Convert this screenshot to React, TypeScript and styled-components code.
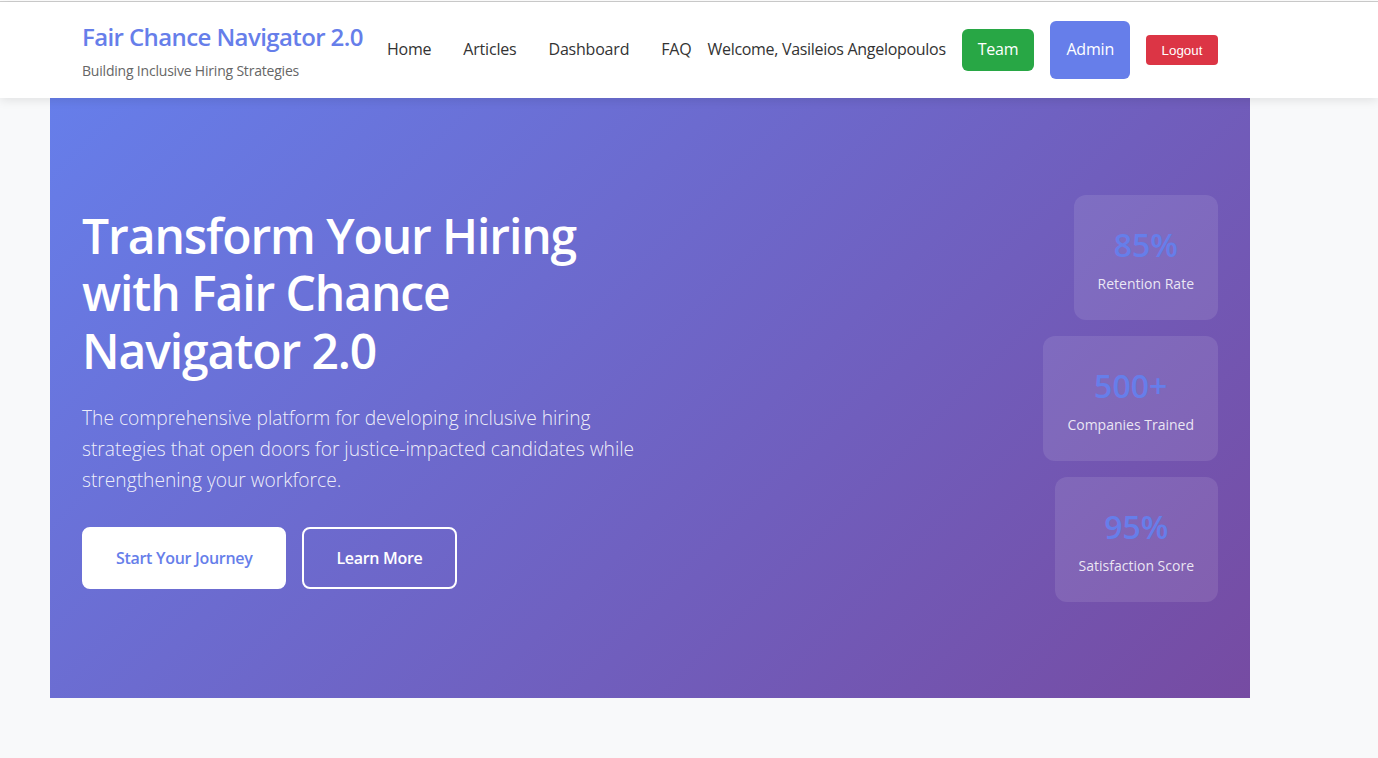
import React from "react";
import styled, { createGlobalStyle } from "styled-components";

const Global = createGlobalStyle`
  html, body { margin: 0; padding: 0; }
  body {
    background: #f8f9fa;
    font-family: "Open Sans", "Noto Sans", sans-serif;
    color: #333;
    line-height: 1.6;
  }
  * { box-sizing: border-box; }
`;

const TopRule = styled.div`
  height: 2px;
  background: linear-gradient(#ffffff 50%, #cfcfcf 50%);
`;

const Header = styled.header`
  background: #fff;
  box-shadow: 0 2px 10px rgba(0, 0, 0, 0.1);
  position: relative;
  z-index: 2;
`;

const HeaderInner = styled.div`
  width: 1200px;
  margin-left: 50px;
  padding: 16px 32px;
  display: flex;
  align-items: center;
  justify-content: space-between;
  white-space: nowrap;
`;

const Brand = styled.div`
  display: flex;
  flex-direction: column;
  flex-shrink: 0;
`;

const BrandTitle = styled.h1`
  margin: 0;
  font-size: 24px;
  font-weight: 600;
  letter-spacing: -0.6px;
  color: #667eea;
  line-height: 38px;
`;

const BrandSub = styled.p`
  margin: 4px 0 0;
  font-size: 14px;
  color: #666;
  line-height: 22px;
  letter-spacing: -0.2px;
`;

const Nav = styled.nav`
  display: flex;
  align-items: center;
  flex-shrink: 0;
`;

const NavLink = styled.a`
  padding: 8px 16px;
  color: #333;
  font-size: 16px;
  text-decoration: none;
  font-weight: 400;
  letter-spacing: -0.2px;
`;

const UserArea = styled.div`
  display: flex;
  align-items: center;
  gap: 16px;
`;

const Welcome = styled.span`
  font-size: 16px;
  color: #333;
  letter-spacing: -0.3px;
`;

const NavButton = styled.a<{ $bg: string; $tall?: boolean }>`
  background: ${(p) => p.$bg};
  color: #fff;
  font-size: 16px;
  font-weight: 400;
  text-decoration: none;
  border-radius: 6px;
  padding: ${(p) => (p.$tall ? "16px" : "8px")} 16px;
  line-height: 25.6px;
  letter-spacing: -0.2px;
`;

const LogoutButton = styled.button`
  background: #dc3545;
  color: #fff;
  border: none;
  border-radius: 4px;
  font-family: "Liberation Sans", Arial, sans-serif;
  font-size: 13.33px;
  padding: 0 15px;
  height: 30px;
  width: 72px;
`;

const Hero = styled.section`
  width: 1200px;
  height: 600px;
  margin-left: 50px;
  padding: 0 32px;
  background: linear-gradient(135deg, #667eea 0%, #764ba2 100%);
  display: flex;
  align-items: center;
  justify-content: space-between;
  color: #fff;
`;

const HeroText = styled.div`
  width: 580px;
`;

const HeroTitle = styled.h2`
  margin: 0 0 24px;
  font-size: 48px;
  font-weight: 600;
  letter-spacing: -1.1px;
  line-height: 1.2;
`;

const HeroLead = styled.p`
  margin: 0 0 32px;
  font-size: 19.2px;
  font-weight: 300;
  line-height: 1.6;
  color: rgba(255, 255, 255, 0.9);
`;

const Actions = styled.div`
  display: flex;
  gap: 16px;
`;

const CTA = styled.a<{ $primary?: boolean }>`
  display: inline-block;
  padding: 16px 32px;
  border: 2px solid #fff;
  border-radius: 8px;
  font-size: 16px;
  font-weight: 600;
  line-height: 26px;
  letter-spacing: -0.3px;
  text-decoration: none;
  background: ${(p) => (p.$primary ? "#fff" : "transparent")};
  color: ${(p) => (p.$primary ? "#667eea" : "#fff")};
`;

const Stats = styled.div`
  display: flex;
  flex-direction: column;
  align-items: flex-end;
  gap: 16px;
`;

const StatCard = styled.div`
  background: rgba(255, 255, 255, 0.1);
  border-radius: 12px;
  padding: 31px 24px 23px;
  text-align: center;
  height: 125px;
`;

const StatNumber = styled.div`
  font-size: 32px;
  font-weight: 600;
  line-height: 38px;
  color: #667eea;
  margin-bottom: 9px;
`;

const StatLabel = styled.div`
  font-size: 14px;
  line-height: 22px;
  color: rgba(255, 255, 255, 0.85);
`;

const stats = [
  { n: "85%", l: "Retention Rate" },
  { n: "500+", l: "Companies Trained" },
  { n: "95%", l: "Satisfaction Score" },
];

export default function App() {
  return (
    <>
      <Global />
      <TopRule />
      <Header>
        <HeaderInner>
          <Brand>
            <BrandTitle>Fair Chance Navigator 2.0</BrandTitle>
            <BrandSub>Building Inclusive Hiring Strategies</BrandSub>
          </Brand>
          <Nav>
            <NavLink href="#">Home</NavLink>
            <NavLink href="#">Articles</NavLink>
            <NavLink href="#">Dashboard</NavLink>
            <NavLink href="#">FAQ</NavLink>
            <UserArea>
              <Welcome>Welcome, Vasileios Angelopoulos</Welcome>
              <NavButton $bg="#28a745" href="#">Team</NavButton>
              <NavButton $bg="#667eea" $tall href="#">Admin</NavButton>
              <LogoutButton>Logout</LogoutButton>
            </UserArea>
          </Nav>
        </HeaderInner>
      </Header>
      <Hero>
        <HeroText>
          <HeroTitle>Transform Your Hiring with Fair Chance Navigator 2.0</HeroTitle>
          <HeroLead>
            The comprehensive platform for developing inclusive hiring strategies that open doors for
            justice-impacted candidates while strengthening your workforce.
          </HeroLead>
          <Actions>
            <CTA $primary href="#">Start Your Journey</CTA>
            <CTA href="#">Learn More</CTA>
          </Actions>
        </HeroText>
        <Stats>
          {stats.map((s) => (
            <StatCard key={s.l}>
              <StatNumber>{s.n}</StatNumber>
              <StatLabel>{s.l}</StatLabel>
            </StatCard>
          ))}
        </Stats>
      </Hero>
    </>
  );
}
